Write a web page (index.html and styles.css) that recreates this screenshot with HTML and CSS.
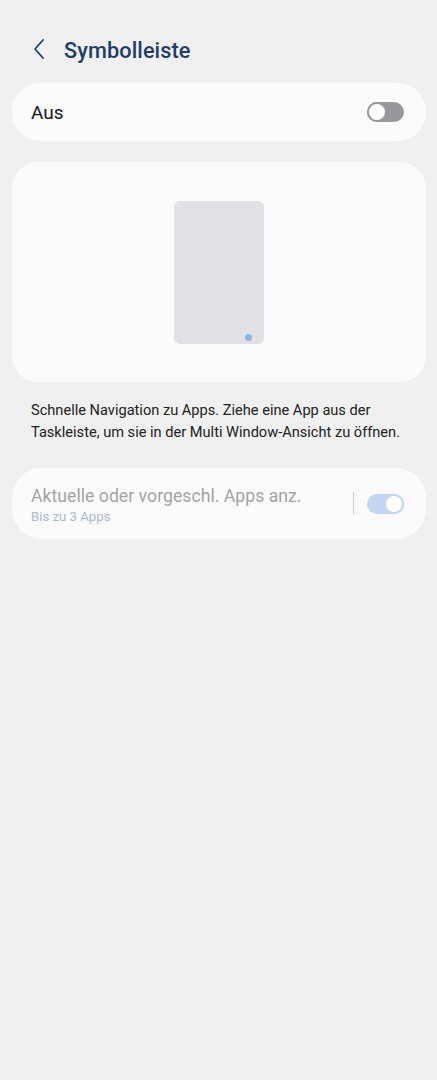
FILE: index.html
```html
<!DOCTYPE html>
<html lang="de">
<head>
<meta charset="utf-8">
<title>Symbolleiste</title>
<link rel="stylesheet" href="styles.css">
</head>
<body>
<div class="page">
  <header class="header">
    <svg class="back" width="14" height="24" viewBox="0 0 14 24"><path d="M11 3 L3 12 L11 21" fill="none" stroke="#233d6b" stroke-width="1.8" stroke-linecap="round" stroke-linejoin="round"/></svg>
    <h1 class="title">Symbolleiste</h1>
  </header>

  <div class="card master">
    <span class="master-label">Aus</span>
    <span class="switch off"><span class="knob"></span></span>
  </div>

  <div class="card preview">
    <div class="tablet"><span class="dot"></span></div>
  </div>

  <p class="desc">Schnelle Navigation zu Apps. Ziehe eine App aus der Taskleiste, um sie in der Multi Window-Ansicht zu öffnen.</p>

  <div class="card option">
    <div class="option-text">
      <div class="option-title">Aktuelle oder vorgeschl. Apps anz.</div>
      <div class="option-sub">Bis zu 3 Apps</div>
    </div>
    <span class="divider"></span>
    <span class="switch on"><span class="knob"></span></span>
  </div>
</div>
</body>
</html>
```

FILE: styles.css
```css
html, body {
  margin: 0;
  padding: 0;
  background: #f0f0f0;
}
body {
  font-family: Roboto, "Noto Sans", "Liberation Sans", sans-serif;
  color: #1c1c1c;
}
.page {
  width: 437px;
  height: 1080px;
  padding: 0 11px 0 12px;
  box-sizing: border-box;
  display: flex;
  flex-direction: column;
}
.header {
  display: flex;
  align-items: center;
  height: 52px;
  margin-top: 24px;
  padding-left: 20px;
  gap: 18px;
  margin-bottom: 7px;
}
.back {
  display: block;
  margin-top: -2px;
}
.title {
  margin: 0;
  font-size: 21.7px;
  font-weight: 500;
  color: #233d6b;
  letter-spacing: 0.1px;
}
.card {
  background: #fbfbfb;
  border-radius: 28px;
}
.master {
  height: 58px;
  display: flex;
  align-items: center;
  justify-content: space-between;
  padding: 0 22px 0 19px;
}
.master-label {
  font-size: 19px;
  color: #151515;
}
.switch {
  position: relative;
  width: 37px;
  height: 20px;
  border-radius: 10px;
  box-sizing: border-box;
  display: block;
}
.switch .knob {
  position: absolute;
  top: 0;
  width: 20px;
  height: 20px;
  border-radius: 50%;
  background: #fff;
  box-sizing: border-box;
}
.switch.off {
  background: #98989c;
}
.switch.off .knob {
  left: 0;
  border: 2px solid #98989c;
}
.switch.on {
  background: #c3d6f1;
}
.switch.on .knob {
  right: 0;
  border: 2px solid #c3d6f1;
}
.preview {
  margin-top: 21px;
  height: 220px;
  border-radius: 26px;
  display: flex;
  justify-content: center;
  padding-top: 39px;
  box-sizing: border-box;
}
.tablet {
  position: relative;
  width: 90px;
  height: 143px;
  border-radius: 6px;
  background: #e0e0e5;
}
.dot {
  position: absolute;
  right: 12px;
  bottom: 3px;
  width: 7px;
  height: 7px;
  border-radius: 50%;
  background: #8db3ea;
}
.desc {
  margin: 17px 0 0 19px;
  padding-right: 10px;
  font-size: 14.6px;
  line-height: 22px;
  color: #222;
}
.option {
  margin-top: 25px;
  height: 71px;
  display: flex;
  align-items: center;
  padding: 0 22px 0 19px;
  border-radius: 30px;
}
.option-text {
  flex: 1;
  padding-top: 2px;
}
.option-title {
  font-size: 17.7px;
  color: #a4a4a4;
  line-height: 22px;
}
.option-sub {
  font-size: 13.2px;
  color: #a6bad3;
  margin-top: 2px;
}
.divider {
  width: 1px;
  height: 23px;
  background: #cfcfcf;
  margin-right: 13px;
}
```
